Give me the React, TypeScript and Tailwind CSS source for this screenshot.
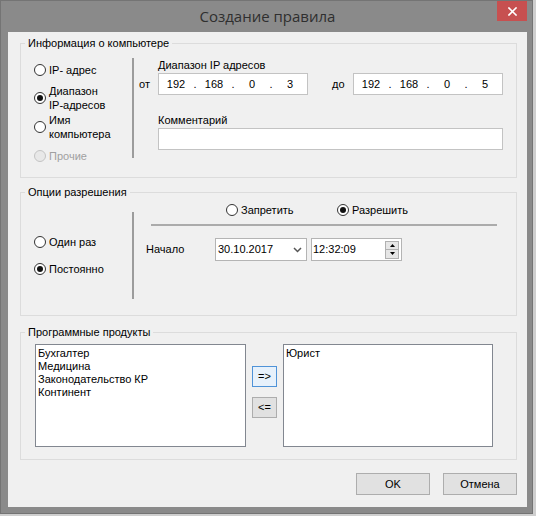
import React from "react";

function Radio({ checked = false, disabled = false }: { checked?: boolean; disabled?: boolean }) {
  return (
    <span
      className={
        disabled
          ? "w-[12px] h-[12px] rounded-full border border-[#c4c4c4] bg-[#e8e8e8] flex items-center justify-center shrink-0"
          : "w-[12px] h-[12px] rounded-full border border-[#333333] bg-white flex items-center justify-center shrink-0"
      }
    >
      {checked && <span className="w-[6px] h-[6px] rounded-full bg-[#111111]" />}
    </span>
  );
}

function IpBox({ parts }: { parts: string[] }) {
  return (
    <div className="w-[150px] h-[22px] border border-[#c3c3c3] bg-white flex items-center">
      <span className="flex-1 text-center">{parts[0]}</span>
      <span className="w-[4px] text-center">.</span>
      <span className="flex-1 text-center">{parts[1]}</span>
      <span className="w-[4px] text-center">.</span>
      <span className="flex-1 text-center">{parts[2]}</span>
      <span className="w-[4px] text-center">.</span>
      <span className="flex-1 text-center">{parts[3]}</span>
    </div>
  );
}

export default function App() {
  return (
    <div className="w-[536px] h-[516px] bg-[#cfcfcf] overflow-hidden font-['Liberation_Sans',sans-serif] text-[11px] text-black">
      <div className="w-[533px] h-[514px] bg-[#8a8a8a] border border-[#747474] flex flex-col pl-[7px] pr-[5px] pb-[6px]">
        {/* Title bar */}
        <div className="h-[31px] grid grid-cols-[30px_1fr_30px] items-start shrink-0">
          <div />
          <div className="h-[31px] flex items-center justify-center text-[15px] text-[#2f2f2f] font-['Open_Sans',sans-serif]">
            Создание правила
          </div>
          <div className="w-[30px] h-[20px] bg-[#c75050] flex items-center justify-center">
            <svg width="9" height="9" viewBox="0 0 9 9">
              <path d="M1 1 L8 8 M8 1 L1 8" stroke="#ffffff" strokeWidth="1.6" strokeLinecap="square" />
            </svg>
          </div>
        </div>

        {/* Client area */}
        <div className="flex-1 bg-[#f0f0f0] flex flex-col">
          {/* Group 1 */}
          <fieldset className="ml-[12px] mr-[10px] mt-[4px] h-[142px] border border-[#dcdcdc] min-w-0">
            <legend className="ml-[4px] px-[3px] leading-[14px]">Информация о компьютере</legend>
            <div className="flex pl-[13px]">
              <div className="w-[98px] flex flex-col">
                <div className="mt-[13px] h-[14px] flex items-center gap-[3px]">
                  <Radio />
                  <span className="leading-[14px]">IP- адрес</span>
                </div>
                <div className="mt-[7px] flex items-center gap-[3px]">
                  <Radio checked />
                  <span className="leading-[14px]">
                    Диапазон
                    <br />
                    IP-адресов
                  </span>
                </div>
                <div className="mt-[1px] flex items-center gap-[3px]">
                  <Radio />
                  <span className="leading-[14px]">
                    Имя
                    <br />
                    компьютера
                  </span>
                </div>
                <div className="mt-[8px] h-[14px] flex items-center gap-[3px]">
                  <Radio disabled />
                  <span className="leading-[14px] text-[#a0a0a0]">Прочие</span>
                </div>
              </div>
              <div className="mt-[8px] h-[100px] w-[2px] bg-[#9c9c9c]" />
              <div className="flex flex-col">
                <div className="mt-[8px] ml-[24px] leading-[14px]">Диапазон IP адресов</div>
                <div className="mt-[1px] flex items-center">
                  <span className="w-[24px] pl-[5px]">от</span>
                  <IpBox parts={["192", "168", "0", "3"]} />
                  <span className="w-[45px] pl-[24px]">до</span>
                  <IpBox parts={["192", "168", "0", "5"]} />
                </div>
                <div className="mt-[18px] ml-[24px] leading-[14px]">Комментарий</div>
                <div className="mt-[1px] ml-[24px] w-[345px] h-[22px] border border-[#c3c3c3] bg-white" />
              </div>
            </div>
          </fieldset>

          {/* Group 2 */}
          <fieldset className="ml-[12px] mr-[10px] mt-[7px] h-[131px] border border-[#dcdcdc] min-w-0">
            <legend className="ml-[4px] px-[3px] leading-[14px]">Опции разрешения</legend>
            <div className="flex pl-[13px]">
              <div className="w-[98px] flex flex-col">
                <div className="mt-[36px] h-[14px] flex items-center gap-[3px]">
                  <Radio />
                  <span className="leading-[14px]">Один раз</span>
                </div>
                <div className="mt-[13px] h-[14px] flex items-center gap-[3px]">
                  <Radio checked />
                  <span className="leading-[14px]">Постоянно</span>
                </div>
              </div>
              <div className="mt-[13px] h-[87px] w-[2px] bg-[#9c9c9c]" />
              <div className="flex-1 flex flex-col">
                <div className="mt-[4px] h-[14px] flex pl-[92px]">
                  <div className="w-[111px] flex items-center gap-[3px]">
                    <Radio />
                    <span className="leading-[14px]">Запретить</span>
                  </div>
                  <div className="flex items-center gap-[3px]">
                    <Radio checked />
                    <span className="leading-[14px]">Разрешить</span>
                  </div>
                </div>
                <div className="mt-[7px] ml-[17px] w-[346px] h-[2px] bg-[#ababab]" />
                <div className="mt-[12px] flex items-center">
                  <span className="ml-[12px] w-[69px]">Начало</span>
                  <div className="w-[92px] h-[23px] border border-[#b4b4b4] bg-white flex items-center justify-between pl-[2px] pr-[4px]">
                    <span>30.10.2017</span>
                    <svg width="9" height="6" viewBox="0 0 9 6">
                      <path d="M1 1 L4.5 4.5 L8 1" fill="none" stroke="#555555" strokeWidth="1.5" />
                    </svg>
                  </div>
                  <div className="ml-[4px] w-[91px] h-[23px] border border-[#b4b4b4] bg-white flex items-center justify-between pl-[1px] pr-[2px]">
                    <span>12:32:09</span>
                    <div className="flex flex-col">
                      <div className="w-[14px] h-[9px] bg-[#e6e6e6] border border-[#b0b0b0] flex items-center justify-center">
                        <svg width="5" height="3" viewBox="0 0 5 3">
                          <path d="M0 3 L2.5 0 L5 3 Z" fill="#000000" />
                        </svg>
                      </div>
                      <div className="w-[14px] h-[9px] bg-[#e6e6e6] border border-[#b0b0b0] border-t-0 flex items-center justify-center">
                        <svg width="5" height="3" viewBox="0 0 5 3">
                          <path d="M0 0 L2.5 3 L5 0 Z" fill="#000000" />
                        </svg>
                      </div>
                    </div>
                  </div>
                </div>
              </div>
            </div>
          </fieldset>

          {/* Group 3 */}
          <fieldset className="ml-[12px] mr-[10px] mt-[9px] h-[135px] border border-[#dcdcdc] min-w-0">
            <legend className="ml-[4px] px-[3px] leading-[14px]">Программные продукты</legend>
            <div className="flex pl-[14px] pt-[5px]">
              <div className="w-[211px] h-[103px] border border-[#828790] bg-white pl-[2px] pt-[2px] leading-[13px]">
                <div>Бухгалтер</div>
                <div>Медицина</div>
                <div>Законодательство КР</div>
                <div>Континент</div>
              </div>
              <div className="ml-[6px] pt-[22px] flex flex-col gap-[10px]">
                <div className="w-[25px] h-[21px] border border-[#4f93d8] bg-[#e7f1fb] flex items-center justify-center">=&gt;</div>
                <div className="w-[25px] h-[21px] border border-[#adadad] bg-[#e1e1e1] flex items-center justify-center">&lt;=</div>
              </div>
              <div className="ml-[6px] w-[210px] h-[103px] border border-[#828790] bg-white pl-[2px] pt-[2px] leading-[13px]">
                <div>Юрист</div>
              </div>
            </div>
          </fieldset>

          {/* Buttons */}
          <div className="mt-[13px] mr-[10px] flex justify-end gap-[13px]">
            <div className="w-[74px] h-[22px] border border-[#adadad] bg-[#e1e1e1] flex items-center justify-center">OK</div>
            <div className="w-[74px] h-[22px] border border-[#adadad] bg-[#e1e1e1] flex items-center justify-center">Отмена</div>
          </div>
        </div>
      </div>
    </div>
  );
}
